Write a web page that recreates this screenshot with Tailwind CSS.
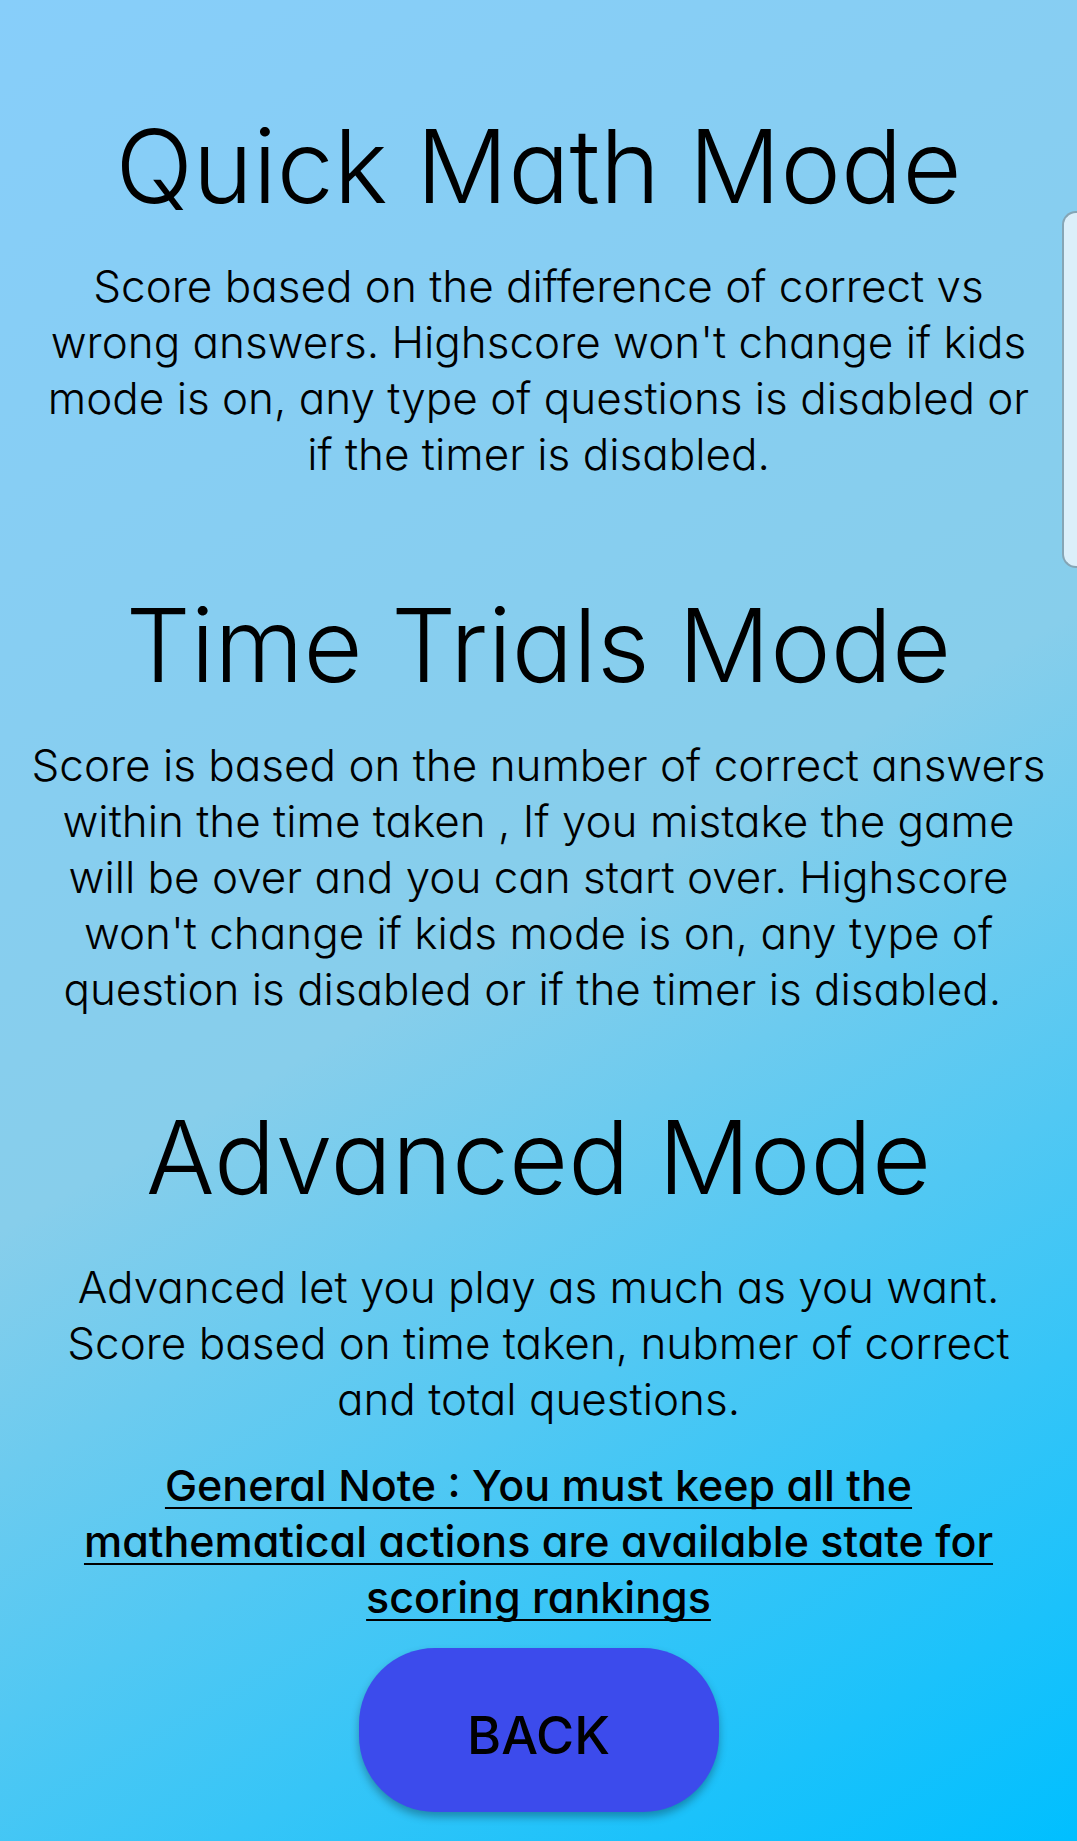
<!DOCTYPE html>
<html lang="en">
<head>
<meta charset="utf-8">
<meta name="viewport" content="width=device-width, initial-scale=1">
<title>Game Modes</title>
<script src="https://cdn.jsdelivr.net/npm/@tailwindcss/browser@4"></script>
</head>
<body class="relative min-h-screen overflow-x-hidden bg-[linear-gradient(150deg,#87cefa,#87ceeb_50%,#00bfff)] font-['Inter',sans-serif] text-black [font-feature-settings:'cv11']">
<main class="flex flex-col items-center px-4 pt-[102px] pb-7 text-center text-[44px] leading-[56px] font-light">
  <section class="mb-[99px]">
    <h1 class="mb-7 text-[102px] leading-[128px] whitespace-nowrap">Quick Math Mode</h1>
    <p class="whitespace-nowrap">Score based on the difference of correct vs<br>wrong answers. Highscore won't change if kids<br>mode is on, any type of questions is disabled or<br>if the timer is disabled.</p>
  </section>
  <section class="mb-[76px]">
    <h2 class="mb-7 text-[102px] leading-[128px] whitespace-nowrap">Time Trials Mode</h2>
    <p class="whitespace-nowrap">Score is based on the number of correct answers<br>within the time taken , If you mistake the game<br>will be over and you can start over. Highscore<br>won't change if kids mode is on, any type of<br>question is disabled or if the timer is disabled.&nbsp;</p>
  </section>
  <section class="mb-[30px]">
    <h2 class="mb-[38px] text-[102px] leading-[128px] whitespace-nowrap">Advanced Mode</h2>
    <p class="whitespace-nowrap">Advanced let you play as much as you want.<br>Score based on time taken, nubmer of correct<br>and total questions.</p>
  </section>
  <p class="mb-[23px] text-[43px] font-medium whitespace-nowrap underline decoration-2 underline-offset-[6px] [text-decoration-skip-ink:none]">General Note : You must keep all the<br>mathematical actions are available state for<br>scoring rankings</p>
  <button type="button" class="h-[164px] w-[360px] rounded-[76px] bg-[#3c4bec] pt-3 text-[52px] font-medium shadow-[0_5px_8px_rgba(0,0,0,0.3)]">BACK</button>
</main>
<div class="absolute top-[211px] right-0 h-[357px] w-[15px] rounded-l-[14px] border-2 border-r-0 border-[#85a5b5] bg-[#dbeffa]"></div>
</body>
</html>
